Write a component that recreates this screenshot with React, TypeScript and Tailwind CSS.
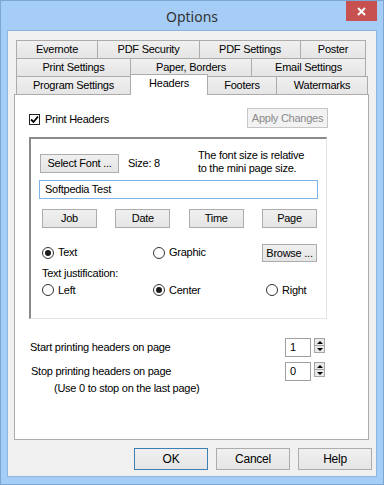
import React from "react";

const tabRows = [
  [
    { label: "Evernote", w: "w-[82px]" },
    { label: "PDF Security", w: "w-[103px]" },
    { label: "PDF Settings", w: "w-[102px]" },
    { label: "Poster", w: "w-[66px]" },
  ],
  [
    { label: "Print Settings", w: "w-[115px]" },
    { label: "Paper, Borders", w: "w-[122px]" },
    { label: "Email Settings", w: "w-[115px]" },
  ],
];

const activeRow = [
  { label: "Program Settings", w: "w-[115px]" },
  { label: "Headers", w: "w-[78px]", active: true },
  { label: "Footers", w: "w-[70px]" },
  { label: "Watermarks", w: "w-[92px]" },
];

const Tab: React.FC<{ label: string; w: string; first?: boolean }> = ({ label, w, first }) => (
  <div
    className={`${w} ${first ? "" : "-ml-px"} h-[18px] border border-b-0 border-[#acacac] bg-gradient-to-b from-[#f0f0f0] to-[#e5e5e5] flex items-center justify-center`}
  >
    {label}
  </div>
);

const Button: React.FC<{ label: string; className?: string }> = ({ label, className = "" }) => (
  <div
    className={`border border-[#acacac] bg-gradient-to-b from-[#f0f0f0] to-[#e5e5e5] flex items-center justify-center ${className}`}
  >
    {label}
  </div>
);

const Radio: React.FC<{ label: string; checked?: boolean; className?: string }> = ({
  label,
  checked,
  className = "",
}) => (
  <div className={`flex items-center gap-[4px] ${className}`}>
    <div className="w-[12px] h-[12px] rounded-full border border-[#333] bg-white flex items-center justify-center">
      {checked && <div className="w-[6px] h-[6px] rounded-full bg-[#1a1a1a]" />}
    </div>
    <span>{label}</span>
  </div>
);

const Spinner: React.FC<{ value: string }> = ({ value }) => (
  <div className="flex items-start gap-[3px]">
    <div className="w-[26px] h-[19px] border border-[#a0a0a0] bg-white flex items-center pl-[4px]">
      {value}
    </div>
    <div className="w-[11px] h-[15px] border border-[#a5a5a5] bg-[#e9e9e9] flex flex-col">
      <div className="flex-1 flex items-center justify-center border-b border-[#a5a5a5]">
        <div className="w-0 h-0 border-l-[3px] border-r-[3px] border-b-[3px] border-l-transparent border-r-transparent border-b-black" />
      </div>
      <div className="flex-1 flex items-center justify-center">
        <div className="w-0 h-0 border-l-[3px] border-r-[3px] border-t-[3px] border-l-transparent border-r-transparent border-t-black" />
      </div>
    </div>
  </div>
);

export default function App() {
  return (
    <div className="w-[384px] h-[485px] bg-[#a5cdf5] border border-[#7ea6d4] flex flex-col text-[11px] tracking-[-0.25px] text-black font-['Liberation_Sans',Arial,sans-serif]">
      {/* title bar */}
      <div className="h-[29px] grid grid-cols-[1fr_auto_1fr] items-start">
        <div />
        <div className="pt-[5px] text-[14px] tracking-normal text-[#333] font-['Noto_Sans',sans-serif]">Options</div>
        <div className="flex justify-end pr-[6px]">
          <div className="w-[31px] h-[20px] bg-[#c75050] flex items-center justify-center">
            <svg width="9" height="9" viewBox="0 0 9 9">
              <path d="M1 1 L8 8 M8 1 L1 8" stroke="white" strokeWidth="2" />
            </svg>
          </div>
        </div>
      </div>

      {/* client area */}
      <div className="ml-[6px] w-[370px] h-[447px] border border-[#8fb6e2] bg-[#f0f0f0] flex flex-col">
        {/* tab control */}
        <div className="ml-[6px] mt-[9px] w-[355px] flex flex-col">
          {tabRows.map((row, i) => (
            <div key={i} className="flex pl-[2px]">
              {row.map((t, j) => (
                <Tab key={t.label} label={t.label} w={t.w} first={j === 0} />
              ))}
            </div>
          ))}
          <div className="flex items-end h-[18px] pl-[2px] relative z-10">
            {activeRow.map((t, j) =>
              t.active ? (
                <div
                  key={t.label}
                  className={`${t.w} -ml-px -mb-px h-[21px] border border-b-0 border-[#acacac] bg-white flex items-center justify-center pb-[3px]`}
                >
                  {t.label}
                </div>
              ) : (
                <Tab key={t.label} label={t.label} w={t.w} first={j === 0} />
              )
            )}
          </div>

          {/* panel */}
          <div className="h-[346px] border border-[#acacac] bg-white flex flex-col pl-[14px]">
            <div className="w-[299px] flex flex-col">
              <div className="mt-[13px] h-[20px] flex items-center justify-between">
                <div className="flex items-center gap-[5px] pt-[2px]">
                  <div className="w-[11px] h-[11px] border border-[#222] bg-white flex items-center justify-center">
                    <svg width="9" height="9" viewBox="0 0 9 9">
                      <path d="M1 4.5 L3.5 7 L8 1.5" stroke="black" strokeWidth="1.8" fill="none" />
                    </svg>
                  </div>
                  <span>Print Headers</span>
                </div>
                <div className="w-[81px] h-[20px] border border-[#c6c6c6] bg-[#f2f2f2] text-[#8a8a8a] flex items-center justify-center">
                  Apply Changes
                </div>
              </div>

              {/* sunken group */}
              <div className="mt-[9px] w-[298px] h-[182px] border-t-2 border-l-2 border-r border-b border-t-[#8a8a8a] border-l-[#8a8a8a] border-r-[#e3e3e3] border-b-[#e3e3e3] flex flex-col pl-[9px]">
                <div className="mt-[15px] h-[19px] flex items-center">
                  <Button label="Select Font ..." className="w-[79px] h-[19px]" />
                  <span className="ml-[9px]">Size: 8</span>
                  <div className="ml-[38px] -mt-[4px] leading-[13px]">
                    <div>The font size is relative</div>
                    <div>to the mini page size.</div>
                  </div>
                </div>
                <div className="mt-[7px] -ml-px w-[279px] h-[19px] border border-[#7eb4ea] bg-white flex items-center pl-[5px]">
                  Softpedia Test
                </div>
                <div className="mt-[10px] ml-[2px] w-[275px] flex justify-between">
                  {["Job", "Date", "Time", "Page"].map((b) => (
                    <Button key={b} label={b} className="w-[55px] h-[19px]" />
                  ))}
                </div>
                <div className="mt-[16px] ml-[2px] w-[275px] h-[18px] flex items-center">
                  <Radio label="Text" checked className="w-[111px] -mt-px" />
                  <Radio label="Graphic" className="w-[109px] -mt-px" />
                  <Button label="Browse ..." className="w-[55px] h-[18px]" />
                </div>
                <div className="mt-[5px] ml-[2px] leading-[13px]">Text justification:</div>
                <div className="mt-[2px] ml-[2px] w-[280px] flex items-center">
                  <Radio label="Left" className="w-[111px]" />
                  <Radio label="Center" checked className="w-[113px]" />
                  <Radio label="Right" />
                </div>
              </div>

              {/* page range */}
              <div className="mt-[19px] ml-px w-[295px] flex items-center justify-between">
                <span>Start printing headers on page</span>
                <Spinner value="1" />
              </div>
              <div className="mt-[5px] ml-[2px] w-[294px] flex items-center justify-between">
                <span>Stop printing headers on page</span>
                <Spinner value="0" />
              </div>
              <div className="-mt-[1px] ml-[25px]">(Use 0 to stop on the last page)</div>
            </div>
          </div>
        </div>

        {/* dialog buttons */}
        <div className="mt-[8px] ml-[126px] flex gap-[8px]">
          <Button label="OK" className="w-[74px] h-[22px] !border-[#3c7fb1] text-[12px]" />
          <Button label="Cancel" className="w-[74px] h-[22px] text-[12px]" />
          <Button label="Help" className="w-[74px] h-[22px] text-[12px]" />
        </div>
      </div>
    </div>
  );
}
